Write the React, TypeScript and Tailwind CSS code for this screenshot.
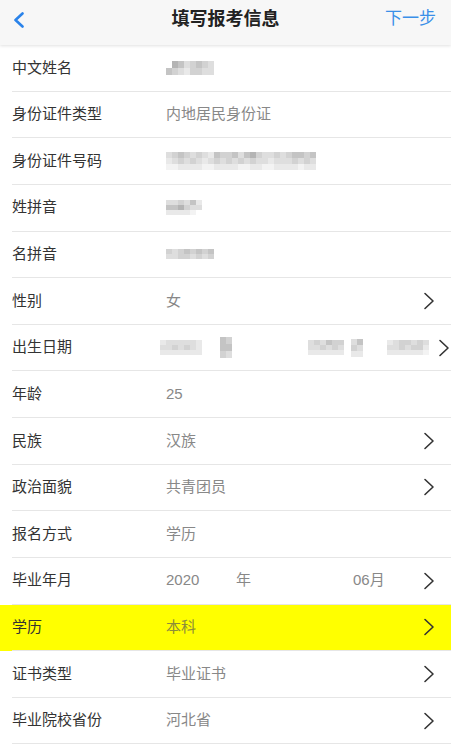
import React from "react";

const F = { fontFamily: '"Liberation Sans", "Noto Sans CJK SC", sans-serif' };

function Mosaic({ rows, cell = 6, rowH = 7 }: { rows: string[]; cell?: number; rowH?: number }) {
  const shades: Record<string, string> = {
    a: "#b4b4b4",
    b: "#c4c4c4",
    c: "#d2d2d2",
    d: "#dedede",
    e: "#e9e9e9",
    f: "#f3f3f3",
    w: "transparent",
  };
  return (
    <div className="flex flex-col">
      {rows.map((r, i) => (
        <div key={i} className="flex">
          {r.split("").map((ch, j) => (
            <div key={j} style={{ width: cell, height: rowH, background: shades[ch] }} />
          ))}
        </div>
      ))}
    </div>
  );
}

function Chevron({ className = "" }: { className?: string }) {
  return (
    <svg width="12" height="18" viewBox="0 0 12 18" className={className}>
      <path d="M2 1.5 L10 9 L2 16.5" fill="none" stroke="#333" strokeWidth="1.6" strokeLinecap="round" strokeLinejoin="round" />
    </svg>
  );
}

type RowProps = {
  label: string;
  value?: React.ReactNode;
  arrow?: boolean;
  highlight?: boolean;
  wideArrow?: boolean;
};

function Row({ label, value, arrow, highlight, wideArrow }: RowProps) {
  return (
    <div className={`h-[46.64px] flex ${highlight ? "bg-[#ffff00]" : "bg-white"}`}>
      <div className="flex-1 ml-[12px] flex items-center border-b border-[#e6e6e6]">
        <div className="w-[154px] text-[15px] text-[#333]">{label}</div>
        <div className={`flex-1 flex items-center text-[15px] ${highlight ? "text-[#8c8c3a]" : "text-[#888]"}`}>
          {value}
        </div>
        <div className={`${wideArrow ? "w-[21px] pr-[11px]" : "w-[28px] pr-[16px]"} flex justify-end items-center box-content`}>
          {arrow && <Chevron />}
        </div>
      </div>
    </div>
  );
}

export default function App() {
  return (
    <div className="w-[451px] h-[751px] bg-white overflow-hidden" style={F}>
      <div className="relative h-[45px] bg-[#f7f7f7] flex items-center justify-between shadow-[0_1px_3px_rgba(0,0,0,0.12)] z-10">
        <div className="pl-[13px] pb-[6px]">
          <svg width="12" height="16" viewBox="0 0 12 16">
            <path d="M9.5 1.5 L2.5 8 L9.5 14.5" fill="none" stroke="#2a83ea" strokeWidth="2.6" strokeLinecap="round" strokeLinejoin="round" />
          </svg>
        </div>
        <div className="absolute left-0 right-0 top-[6px] text-center text-[18px] font-bold text-[#222] pointer-events-none">
          填写报考信息
        </div>
        <div className="pr-[15px] pb-[8px] text-[17px] text-[#3a8fe8]">下一步</div>
      </div>

      <Row
        label="中文姓名"
        value={<Mosaic rows={["wabdcbcd", "bcdeccdd"]} />}
      />
      <Row label="身份证件类型" value="内地居民身份证" />
      <Row
        label="身份证件号码"
        value={<Mosaic rows={["dcbcdcdebccbdbacddcdcbbcb", "edcdcdedcdcdcdcddedddcdcd", "ffeeeeffeeeeffeeffeeeefee"]} rowH={6} />}
      />
      <Row label="姓拼音" value={<Mosaic rows={["ddcdbe", "bbacdd", "eeeefw"]} rowH={5} />} />
      <Row label="名拼音" value={<Mosaic rows={["cdcbcbcb", "ddccdcdc"]} rowH={5} />} />
      <Row label="性别" value="女" arrow />
      <Row
        label="出生日期"
        wideArrow
        arrow
        value={
          <div className="flex items-center -ml-[6px]">
            <Mosaic rows={["eddddde", "ddcdcde", "eeeeeee"]} rowH={5} />
            <div className="ml-[18px]"><Mosaic rows={["bc", "bb", "cd"]} rowH={7} /></div>
            <div className="ml-[76px]"><Mosaic rows={["dcdbcc", "ddcdcd", "eeeeee"]} rowH={5} /></div>
            <div className="ml-[7px]"><Mosaic rows={["db", "cd", "ee"]} rowH={6} /></div>
            <div className="ml-[24px]"><Mosaic rows={["edccdcd", "ddcdcce", "eeeeeef"]} rowH={5} /></div>
          </div>
        }
      />
      <Row label="年龄" value="25" />
      <Row label="民族" value="汉族" arrow />
      <Row label="政治面貌" value="共青团员" arrow />
      <Row label="报名方式" value="学历" />
      <Row
        label="毕业年月"
        arrow
        value={
          <div className="flex items-center">
            <span className="w-[70px]">2020</span>
            <span className="w-[117px]">年</span>
            <span>06月</span>
          </div>
        }
      />
      <Row label="学历" value="本科" arrow highlight />
      <Row label="证书类型" value="毕业证书" arrow />
      <Row label="毕业院校省份" value="河北省" arrow />
    </div>
  );
}
